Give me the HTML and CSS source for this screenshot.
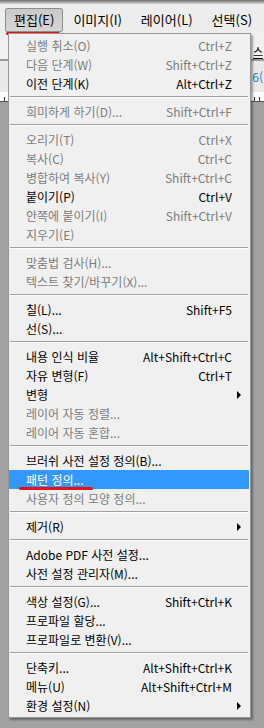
FILE: index.html
```html
<!DOCTYPE html>
<html lang="ko">
<head>
    <meta charset="UTF-8">
    <title>편집 메뉴</title>
    <link rel="stylesheet" href="styles.css">
</head>
<body>

    <div class="app">
        <div class="titlestrip"></div>

        <!-- Menu bar -->
        <div class="menubar">
            <div class="bar-item pressed">편집(E)</div>
            <div class="bar-item">이미지(I)</div>
            <div class="bar-item">레이어(L)</div>
            <div class="bar-item">선택(S)</div>
        </div>

        <!-- Workspace behind the menu -->
        <div class="options-bar">
            <span class="opt-text">스</span>
        </div>
        <div class="tab-row">
            <span class="tab-text">6(</span>
        </div>
        <div class="ruler"></div>
        <div class="canvas-area"></div>

        <!-- Red marks -->
        <div class="mark mark-bar"></div>

        <!-- Edit dropdown -->
        <div class="dropdown">
            <div class="item off"><span>실행 취소(O)</span><span>Ctrl+Z</span></div>
            <div class="item off"><span>다음 단계(W)</span><span>Shift+Ctrl+Z</span></div>
            <div class="item"><span>이전 단계(K)</span><span>Alt+Ctrl+Z</span></div>
            <div class="sep"></div>
            <div class="item off"><span>희미하게 하기(D)...</span><span>Shift+Ctrl+F</span></div>
            <div class="sep"></div>
            <div class="item off"><span>오리기(T)</span><span>Ctrl+X</span></div>
            <div class="item off"><span>복사(C)</span><span>Ctrl+C</span></div>
            <div class="item off"><span>병합하여 복사(Y)</span><span>Shift+Ctrl+C</span></div>
            <div class="item"><span>붙이기(P)</span><span>Ctrl+V</span></div>
            <div class="item off"><span>안쪽에 붙이기(I)</span><span>Shift+Ctrl+V</span></div>
            <div class="item off"><span>지우기(E)</span></div>
            <div class="sep"></div>
            <div class="item off"><span>맞춤법 검사(H)...</span></div>
            <div class="item off"><span>텍스트 찾기/바꾸기(X)...</span></div>
            <div class="sep"></div>
            <div class="item"><span>칠(L)...</span><span>Shift+F5</span></div>
            <div class="item"><span>선(S)...</span></div>
            <div class="sep"></div>
            <div class="item"><span>내용 인식 비율</span><span>Alt+Shift+Ctrl+C</span></div>
            <div class="item"><span>자유 변형(F)</span><span>Ctrl+T</span></div>
            <div class="item"><span>변형</span><span class="arrow"></span></div>
            <div class="item off"><span>레이어 자동 정렬...</span></div>
            <div class="item off"><span>레이어 자동 혼합...</span></div>
            <div class="sep"></div>
            <div class="item"><span>브러쉬 사전 설정 정의(B)...</span></div>
            <div class="item active"><span>패턴 정의...</span><span class="mark mark-item"></span></div>
            <div class="item off"><span>사용자 정의 모양 정의...</span></div>
            <div class="sep"></div>
            <div class="item"><span>제거(R)</span><span class="arrow"></span></div>
            <div class="sep"></div>
            <div class="item"><span>Adobe PDF 사전 설정...</span></div>
            <div class="item"><span>사전 설정 관리자(M)...</span></div>
            <div class="sep"></div>
            <div class="item"><span>색상 설정(G)...</span><span>Shift+Ctrl+K</span></div>
            <div class="item"><span>프로파일 할당...</span></div>
            <div class="item"><span>프로파일로 변환(V)...</span></div>
            <div class="sep"></div>
            <div class="item"><span>단축키...</span><span>Alt+Shift+Ctrl+K</span></div>
            <div class="item"><span>메뉴(U)</span><span>Alt+Shift+Ctrl+M</span></div>
            <div class="item"><span>환경 설정(N)</span><span class="arrow"></span></div>
        </div>
    </div>

</body>
</html>
```

FILE: styles.css
```css
body {
    margin: 0;
    padding: 0;
    font-family: "Noto Sans CJK KR", sans-serif;
    font-size: 12px;
    color: #000;
    background-color: #a2a2a2;
}

.app {
    position: relative;
    width: 264px;
    height: 728px;
    overflow: hidden;
    display: flex;
    flex-direction: column;
}

.titlestrip {
    height: 4px;
    background: linear-gradient(#6b6b6b, #d8d8d8);
}

.menubar {
    height: 29px;
    display: flex;
    align-items: center;
    gap: 1px;
    padding-left: 5px;
    background-color: #ededed;
}

.bar-item {
    height: 22px;
    line-height: 22px;
    padding: 0 8px;
    font-size: 13px;
    margin-top: 3px;
    border: 1px solid transparent;
}

.bar-item.pressed {
    background: linear-gradient(#c9c9c9, #d6d6d6);
    border-color: #8e8e8e;
    border-radius: 2px;
}

.options-bar {
    height: 26px;
    background-color: #f0f0f0;
    border-bottom: 2px solid #9a9a9a;
    display: flex;
    justify-content: flex-end;
    align-items: flex-end;
}

.opt-text {
    font-size: 11px;
    line-height: 14px;
    border-bottom: 1px solid #000;
    margin-right: 1px;
}

.tab-row {
    height: 31px;
    background-color: #e9e9e9;
    display: flex;
    justify-content: flex-end;
    align-items: center;
}

.tab-text {
    color: #2a78c8;
    font-size: 12px;
    margin-right: 1px;
}

.ruler {
    height: 9px;
    background-color: #fafafa;
    border-bottom: 1px solid #555;
    background-image: repeating-linear-gradient(90deg, transparent 0 4px, #333 4px 5px);
    background-size: 100% 4px;
    background-repeat: no-repeat;
    background-position: bottom;
}

.canvas-area {
    flex: 1;
    background-color: #a2a2a2;
}

/* Dropdown menu */
.dropdown {
    position: absolute;
    left: 8px;
    top: 33px;
    width: 241px;
    padding: 2px 0;
    background-color: #f0f0f0;
    border: 1px solid #979797;
    box-shadow: 2px 2px 2px rgba(0, 0, 0, 0.35);
}

.item {
    position: relative;
    height: 19px;
    line-height: 19px;
    display: flex;
    justify-content: space-between;
    align-items: center;
    padding: 0 17px;
    margin: 0 1px 0 0;
    white-space: nowrap;
}

.item.off {
    color: #7c7c7c;
}

.item.active {
    background-color: #3399ff;
    color: #fff;
}

.arrow {
    width: 0;
    height: 0;
    border-left: 4px solid #000;
    border-top: 4px solid transparent;
    border-bottom: 4px solid transparent;
    margin-right: -9px;
}

.sep {
    height: 0;
    margin: 3px 2px 4px 1px;
    border-top: 1px solid #a0a0a0;
    border-bottom: 1px solid #fdfdfd;
}

.mark {
    position: absolute;
    height: 3px;
    border-radius: 2px;
    background-color: #e8101a;
}

.mark-bar {
    left: 6px;
    top: 32px;
    width: 54px;
}

.mark-item {
    left: 10px;
    top: 17px;
    width: 74px;
}
```
